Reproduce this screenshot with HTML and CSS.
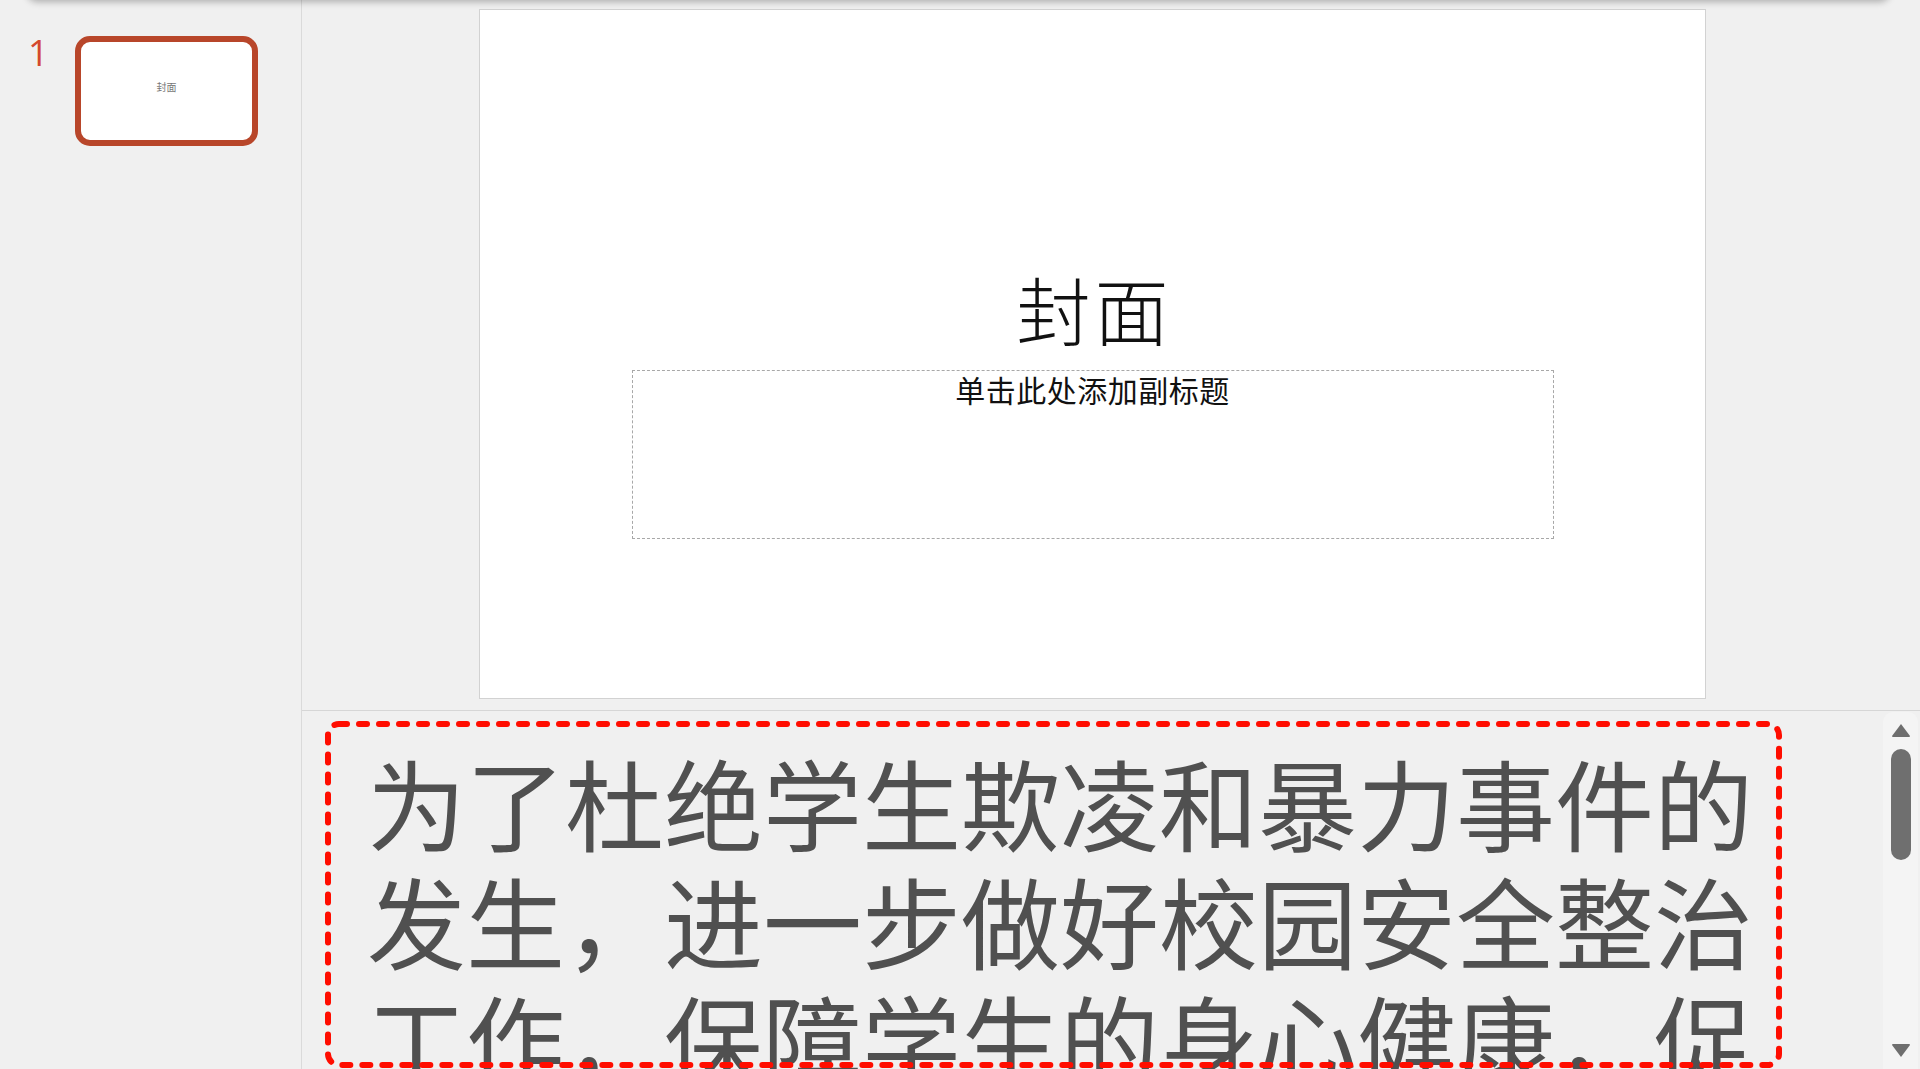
FILE: index.html
```html
<!DOCTYPE html>
<html lang="zh-CN">
<head>
<meta charset="utf-8">
<title>封面</title>
<link rel="stylesheet" href="styles.css">
</head>
<body>
<div class="app">
  <div class="top-shadow"></div>
  <aside class="thumbs">
    <div class="thumb-row">
      <span class="slide-num">1</span>
      <div class="thumb"><span class="thumb-title">封面</span></div>
    </div>
  </aside>
  <main class="workspace">
    <section class="editor">
      <div class="slide">
        <div class="slide-title">封面</div>
        <div class="subtitle-box"><span class="subtitle">单击此处添加副标题</span></div>
      </div>
    </section>
    <section class="notes">
      <div class="notes-body">
        <svg class="notes-frame" width="1462" height="352" viewBox="0 0 1462 352">
          <rect x="3" y="3" width="1451" height="341" rx="11" ry="11" fill="none" stroke="#ff0d00" stroke-width="6" stroke-linecap="round" stroke-dasharray="8 12"/>
        </svg>
        <p class="notes-text">为了杜绝学生欺凌和暴力事件的发生，进一步做好校园安全整治工作，保障学生的身心健康，促进学生健康成长，营造安全和谐的校园环境。</p>
      </div>
      <div class="scrollbar">
        <svg class="arrow" width="22" height="15" viewBox="0 0 22 15"><path d="M11 1 L20 13 Q20 14 19 14 L3 14 Q2 14 2 13 Z" fill="#6e6e6e"/></svg>
        <div class="thumb-bar"></div>
        <div class="track-space"></div>
        <svg class="arrow" width="22" height="15" viewBox="0 0 22 15"><path d="M11 14 L20 2 Q20 1 19 1 L3 1 Q2 1 2 2 Z" fill="#6e6e6e"/></svg>
      </div>
    </section>
  </main>
</div>
</body>
</html>
```
FILE: styles.css
```css
html, body {
  margin: 0;
  padding: 0;
  width: 1920px;
  height: 1069px;
  overflow: hidden;
  background: #f0f0f0;
  font-family: "Noto Sans CJK SC", "Noto Sans", sans-serif;
}

.app {
  position: relative;
  display: flex;
  width: 1920px;
  height: 1069px;
  overflow: hidden;
}

.top-shadow {
  position: absolute;
  top: -20px;
  left: 27px;
  right: 30px;
  height: 20px;
  border-radius: 10px;
  background: #e0e0e0;
  box-shadow: 0 2px 7px rgba(0, 0, 0, 0.28);
  z-index: 5;
}

.thumbs {
  width: 301px;
  flex: none;
  border-right: 1px solid #dadada;
  background: #f0f0f0;
}

.thumb-row {
  display: flex;
  align-items: flex-start;
  padding: 36px 0 0 28px;
}

.slide-num {
  width: 47px;
  font-family: "Open Sans", "Liberation Sans", sans-serif;
  font-weight: 400;
  font-size: 36px;
  line-height: 36px;
  color: #d4482d;
  margin-top: -1px;
}

.thumb {
  width: 171px;
  height: 98px;
  border: 6px solid #b8462a;
  border-radius: 15px;
  background: #ffffff;
  display: flex;
  justify-content: center;
  box-sizing: content-box;
}

.thumb-title {
  margin-top: 40px;
  font-size: 10px;
  line-height: 10px;
  color: #777;
}

.workspace {
  flex: 1;
  display: flex;
  flex-direction: column;
  min-width: 0;
}

.editor {
  height: 711px;
  flex: none;
  border-bottom: 1px solid #d6d6d6;
  padding: 9px 0 0 177px;
  box-sizing: border-box;
}

.slide {
  width: 1227px;
  height: 690px;
  box-sizing: border-box;
  border: 1px solid #d2d2d2;
  background: #ffffff;
  display: flex;
  flex-direction: column;
  align-items: center;
  padding-top: 256px;
}

.slide-title {
  font-size: 74px;
  line-height: 84px;
  font-weight: 300;
  color: #111;
  letter-spacing: 4px;
  padding-left: 4px;
}

.subtitle-box {
  margin-top: 20px;
  width: 922px;
  height: 169px;
  box-sizing: border-box;
  border: 1px dashed #a8a8a8;
  text-align: center;
  padding-top: 0;
}

.subtitle {
  font-size: 30px;
  line-height: 36px;
  color: #111;
  letter-spacing: 0.5px;
}

.notes {
  flex: 1;
  display: flex;
  min-height: 0;
  overflow: hidden;
}

.notes-body {
  position: relative;
  flex: 1;
  padding: 31px 0 0 65px;
  overflow: hidden;
}

.notes-frame {
  position: absolute;
  left: 23px;
  top: 10px;
  z-index: 2;
}

.notes-text {
  margin: 0;
  width: 1420px;
  font-size: 99px;
  line-height: 118px;
  color: #505050;
}

.scrollbar {
  width: 35px;
  flex: none;
  margin: 1px 2px 0 0;
  border-radius: 10px 10px 0 0;
  background: #f4f4f4;
  display: flex;
  flex-direction: column;
  align-items: center;
  padding-top: 11px;
  box-sizing: border-box;
}

.arrow {
  display: block;
  flex: none;
}

.thumb-bar {
  margin-top: 11px;
  width: 20px;
  height: 111px;
  border-radius: 10px;
  background: #6f6f6f;
  flex: none;
}

.track-space {
  flex: 1;
}

.scrollbar .arrow:last-child {
  margin-bottom: 11px;
}
```
